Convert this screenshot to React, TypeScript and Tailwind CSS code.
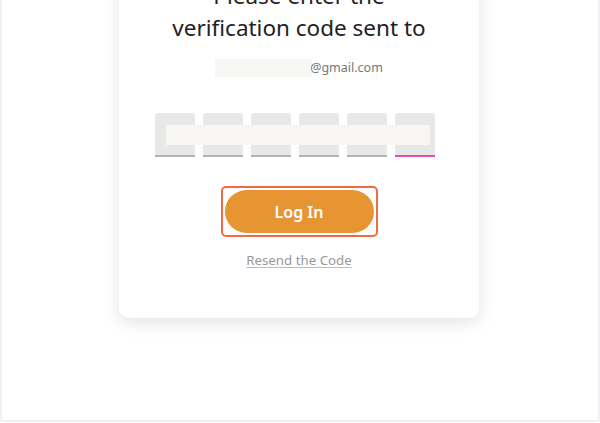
export default function App() {
  const boxes = [0, 1, 2, 3, 4, 5];
  return (
    <div
      className="w-[600px] h-[423px] bg-white overflow-hidden"
      style={{ fontFamily: '"Noto Sans", "Open Sans", sans-serif' }}
    >
      <div className="w-full h-[422px] border-2 border-t-0 border-[#eef0f4] rounded-b-[4px] flex justify-center">
        <div className="w-[360px] h-[340px] -mt-[22px] ml-[-2px] bg-white rounded-[10px] shadow-[0_4px_18px_rgba(0,0,0,0.12)] flex flex-col items-center">
          <div className="mt-[2px] text-[22.5px] leading-[32px] text-[#222] text-center">
            <div>Please enter the</div>
            <div>verification code sent to</div>
          </div>
          <div className="mt-[14px] flex items-center h-[20px]">
            <div className="w-[97px] h-[18px] bg-[#f7f7f6] mr-[-2px]" />
            <span className="text-[12.5px] text-[#777]">@gmail.com</span>
          </div>
          <div className="relative mt-[35px] ml-[-8px] flex gap-[8px]">
            {boxes.map((i) => (
              <div
                key={i}
                className={
                  i === 5
                    ? "w-[40px] h-[44px] bg-[#e8e8e8] rounded-t-[3px] border-b-2 border-[#e14bbf]"
                    : "w-[40px] h-[44px] bg-[#e8e8e8] rounded-t-[3px] border-b-2 border-[#b3b3b3]"
                }
              />
            ))}
            <div className="absolute left-[11px] top-[12px] w-[264px] h-[20px] bg-[#f7f6f3]" />
          </div>
          <div className="mt-[29px] p-[2px] border-2 border-[#f26a45] rounded-[5px]">
            <button className="w-[149px] h-[43px] rounded-full bg-[#e69532] text-white text-[16px] font-semibold">
              Log In
            </button>
          </div>
          <a className="mt-[14px] text-[13.3px] text-[#999] underline decoration-[#bbb] underline-offset-2">
            Resend the Code
          </a>
        </div>
      </div>
    </div>
  );
}
